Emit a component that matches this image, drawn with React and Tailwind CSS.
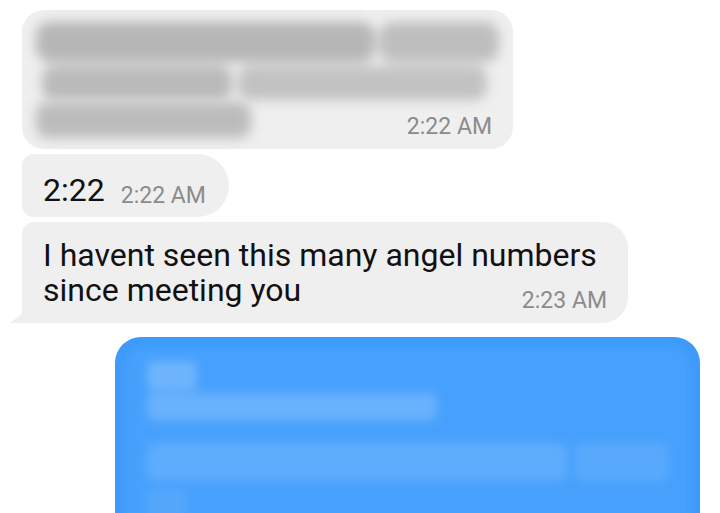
import React from 'react';

const font = { fontFamily: 'Roboto, "Noto Sans", sans-serif' };

export default function App() {
  return (
    <div className="w-[720px] h-[513px] overflow-hidden bg-white" style={font}>
      <div className="flex flex-col items-start pt-[10px]">
        {/* Blurred incoming message */}
        <div className="ml-[22px] w-[491px] h-[139px] rounded-[22px] bg-[#efefef] flex flex-col pl-[14px] pr-[14px] pt-[12px] pb-[4px]">
          <div className="flex flex-col gap-[4px] blur-[6px]">
            <div className="flex gap-[4px] h-[40px]">
              <div className="flex-1 rounded-[14px] bg-[#b6b6b6]" />
              <div className="w-[120px] rounded-[14px] bg-[#bebebe]" />
            </div>
            <div className="flex gap-[6px] h-[34px] pl-[6px] pr-[12px]">
              <div className="w-[190px] rounded-[12px] bg-[#bababa]" />
              <div className="flex-1 rounded-[12px] bg-[#c2c2c2]" />
            </div>
          </div>
          <div className="flex items-end justify-between mt-[2px] pr-[7px]">
            <div className="w-[215px] h-[36px] rounded-[12px] bg-[#bcbcbc] blur-[6px]" />
            <span className="text-[23px] leading-none text-[#8b8b8b]">2:22 AM</span>
          </div>
        </div>

        {/* 2:22 */}
        <div className="ml-[22px] mt-[5px] h-[63px] rounded-l-[12px] rounded-r-[32px] bg-[#efefef] flex items-baseline pl-[21px] pr-[23px] pt-[20px] gap-[16px]">
          <span className="text-[32px] text-[#111] leading-none">2:22</span>
          <span className="text-[23px] text-[#8b8b8b] leading-none relative top-[2px]">2:22 AM</span>
        </div>

        {/* Angel numbers */}
        <div className="relative mt-[5px]">
          <div className="ml-[22px] w-[606px] h-[101px] rounded-l-[12px] rounded-r-[26px] bg-[#efefef] flex flex-col pl-[21px] pr-[21px] pt-[16px]">
            <div className="text-[32px] leading-[35px] text-[#111]">
              I havent seen this many angel numbers
            </div>
            <div className="flex items-baseline justify-between">
              <span className="text-[32px] leading-[35px] text-[#111]">since meeting you</span>
              <span className="text-[23px] leading-none text-[#8b8b8b] relative top-[7px]">2:23 AM</span>
            </div>
          </div>
          <div className="absolute left-[10px] bottom-0 w-[24px] h-[18px] bg-[#efefef] [clip-path:polygon(100%_0,100%_100%,0_100%)]" />
        </div>

        {/* Blue outgoing blurred */}
        <div className="ml-[115px] mt-[14px] w-[585px] h-[200px] rounded-[26px] bg-[#3d9bfb] p-[10px] pb-0">
          <div className="h-full rounded-[20px] bg-[#47a1fc] blur-[4px] flex flex-col gap-[8px] px-[22px] pt-[14px]">
            <div className="w-[50px] h-[30px] rounded-[8px] bg-[#6db4fd]" />
            <div className="w-[290px] h-[28px] rounded-[8px] bg-[#68b1fd] -mt-[6px]" />
            <div className="flex gap-[8px] h-[38px] mt-[14px]">
              <div className="w-[420px] rounded-[8px] bg-[#5eacfc]" />
              <div className="flex-1 rounded-[8px] bg-[#58a9fc]" />
            </div>
            <div className="w-[40px] h-[30px] rounded-[8px] bg-[#55a7fc]" />
          </div>
        </div>
      </div>
    </div>
  );
}
